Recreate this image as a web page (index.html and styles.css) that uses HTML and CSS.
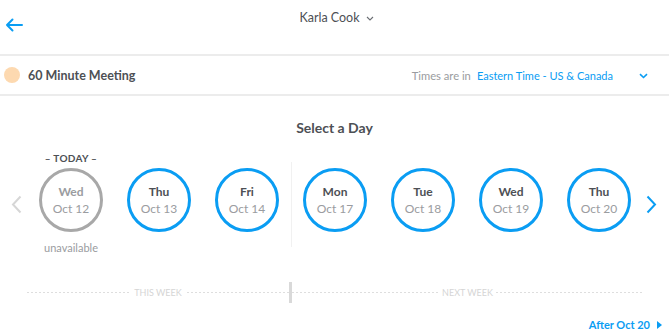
FILE: index.html
```html
<!DOCTYPE html>
<html>
<head>
<meta charset="utf-8">
<link rel="stylesheet" href="styles.css">
</head>
<body>
<div class="page">
  <header class="topbar">
    <button class="back" aria-label="Back">
      <svg width="18" height="14" viewBox="0 0 18 14"><path d="M17 7H2M7.5 1.5L2 7l5.5 5.5" fill="none" stroke="#0a9df3" stroke-width="2" stroke-linecap="round" stroke-linejoin="round"/></svg>
    </button>
    <div class="owner">Karla Cook <svg class="owner-chev" width="8" height="5" viewBox="0 0 8 5"><path d="M1 1l3 3 3-3" fill="none" stroke="#6b6e73" stroke-width="1.1"/></svg></div>
  </header>
  <div class="eventbar">
    <span class="dot"></span>
    <span class="event-name">60 Minute Meeting</span>
    <span class="tz-label">Times are in</span>
    <span class="tz-value">Eastern Time - US &amp; Canada</span>
    <svg class="tz-chev" width="9" height="6" viewBox="0 0 9 6"><path d="M1 1.2l3.5 3.3 3.5-3.3" fill="none" stroke="#0a9df3" stroke-width="1.6"/></svg>
  </div>
  <main class="picker">
    <h1 class="title">Select a Day</h1>
    <div class="days">
      <div class="nav prev">
        <svg width="11" height="19" viewBox="0 0 11 19"><path d="M9.5 1.5L2 9.5l7.5 8" fill="none" stroke="#d6d6d6" stroke-width="2"/></svg>
      </div>
      <div class="week">
        <div class="day">
          <div class="day-top">– TODAY –</div>
          <div class="circle off"><b>Wed</b><span>Oct 12</span></div>
          <div class="day-bottom">unavailable</div>
        </div>
        <div class="day">
          <div class="day-top"></div>
          <div class="circle"><b>Thu</b><span>Oct 13</span></div>
          <div class="day-bottom"></div>
        </div>
        <div class="day">
          <div class="day-top"></div>
          <div class="circle"><b>Fri</b><span>Oct 14</span></div>
          <div class="day-bottom"></div>
        </div>
      </div>
      <div class="week-divider"></div>
      <div class="week">
        <div class="day">
          <div class="day-top"></div>
          <div class="circle"><b>Mon</b><span>Oct 17</span></div>
          <div class="day-bottom"></div>
        </div>
        <div class="day">
          <div class="day-top"></div>
          <div class="circle"><b>Tue</b><span>Oct 18</span></div>
          <div class="day-bottom"></div>
        </div>
        <div class="day">
          <div class="day-top"></div>
          <div class="circle"><b>Wed</b><span>Oct 19</span></div>
          <div class="day-bottom"></div>
        </div>
        <div class="day">
          <div class="day-top"></div>
          <div class="circle"><b>Thu</b><span>Oct 20</span></div>
          <div class="day-bottom"></div>
        </div>
      </div>
      <div class="nav next">
        <svg width="11" height="19" viewBox="0 0 11 19"><path d="M1.5 1.5L9 9.5l-7.5 8" fill="none" stroke="#0a9df3" stroke-width="2"/></svg>
      </div>
    </div>
    <div class="timeline">
      <div class="seg this"><span>THIS WEEK</span></div>
      <div class="marker"></div>
      <div class="seg next"><span>NEXT WEEK</span></div>
    </div>
    <div class="after">After Oct 20 <svg width="5" height="8" viewBox="0 0 5 8"><path d="M0 0l5 4-5 4z" fill="#0a9df3"/></svg></div>
  </main>
</div>
</body>
</html>
```
FILE: styles.css
```css
* { box-sizing: border-box; }
html, body { margin: 0; padding: 0; background: #fff; }
body {
  font-family: Lato, "Open Sans", Arial, sans-serif;
  color: #4d5055;
  width: 669px;
  height: 333px;
  overflow: hidden;
}
.page { width: 669px; }

.topbar {
  height: 56px;
  border-bottom: 2px solid #ececec;
  display: flex;
  justify-content: center;
  position: relative;
}
.back {
  position: absolute;
  left: 5px;
  top: 18px;
  padding: 0;
  border: 0;
  background: none;
  display: flex;
}
.owner {
  margin-top: 9px;
  margin-left: 4px;
  font-size: 12.5px;
  color: #4d5055;
  display: flex;
  align-items: center;
  gap: 6px;
  height: 16px;
}
.owner-chev { margin-top: 2px; }

.eventbar {
  height: 40px;
  border-bottom: 2px solid #ececec;
  display: flex;
  align-items: center;
  padding: 0 21px 0 4px;
}
.dot {
  width: 16px;
  height: 16px;
  border-radius: 50%;
  background: #fdd9b0;
  margin-right: 8px;
}
.event-name {
  font-weight: 700;
  font-size: 12.5px;
  color: #4d5055;
  flex: 1;
}
.tz-label {
  font-size: 11.2px;
  color: #9a9ca0;
  margin-right: 6px;
}
.tz-value {
  font-size: 11px;
  color: #0a9df3;
  margin-right: 26px;
}
.tz-chev { margin-top: 1px; }

.picker { display: flex; flex-direction: column; }
.title {
  margin: 23px 0 0;
  font-size: 14px;
  font-weight: 700;
  text-align: center;
  line-height: 18px;
  color: #4d5055;
}
.days {
  display: flex;
  align-items: center;
  margin-top: 11px;
}
.nav {
  width: 27px;
  height: 106px;
  display: flex;
  align-items: center;
  padding-top: 6px;
}
.nav.prev { padding-left: 11px; }
.nav.next { width: 26px; padding-left: 3px; }
.week { display: flex; }
.week-divider {
  width: 1px;
  height: 85px;
  margin-right: -1px;
  background: #f1f1f1;
  margin-top: 6px;
}
.day {
  width: 88px;
  display: flex;
  flex-direction: column;
  align-items: center;
}
.day-top {
  height: 20px;
  padding-top: 4px;
  font-size: 10px;
  font-weight: 700;
  letter-spacing: 0.3px;
  color: #4d5055;
  line-height: 12px;
}
.circle {
  width: 64px;
  height: 64px;
  border-radius: 50%;
  border: 3px solid #0a9df3;
  display: flex;
  flex-direction: column;
  align-items: center;
  justify-content: center;
  gap: 3px;
  font-size: 12px;
  line-height: 14px;
}
.circle b { color: #4d5055; font-weight: 700; }
.circle span { color: #9a9ca0; }
.circle.off { border-color: #a8a8a8; }
.circle.off b { color: #9a9ca0; }
.day-bottom {
  height: 22px;
  padding-top: 9px;
  font-size: 11px;
  line-height: 13px;
  color: #9a9ca0;
}

.timeline {
  display: flex;
  align-items: center;
  margin: 28px 0 0 27px;
  width: 616px;
  height: 21px;
}
.seg {
  height: 21px;
  display: flex;
  align-items: center;
  justify-content: center;
  background-image: linear-gradient(to right, #dedede 50%, transparent 50%);
  background-size: 4px 1px;
  background-repeat: repeat-x;
  background-position: 0 10px;
}
.seg.this { width: 262px; }
.seg.next { width: 351px; }
.seg span {
  background: #fff;
  padding: 0 3px;
  font-size: 9px;
  color: #d5d5d5;
  line-height: 10px;
}
.marker {
  width: 3px;
  height: 21px;
  background: #d9d9d9;
}

.after {
  align-self: flex-end;
  margin: 15px 7px 0 0;
  font-size: 11px;
  font-weight: 700;
  color: #0a9df3;
  display: flex;
  align-items: center;
  gap: 7px;
}
```
